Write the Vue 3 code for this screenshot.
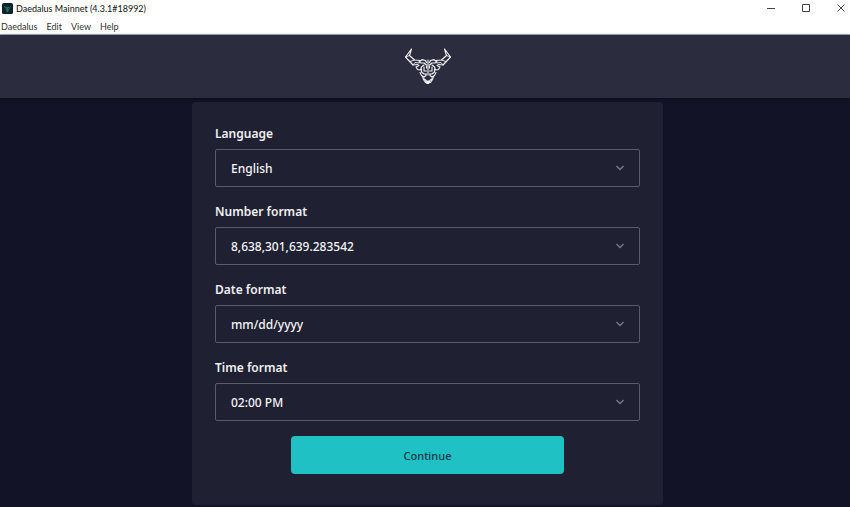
<template>
  <div class="window">
    <header class="titlebar">
      <svg class="app-icon" viewBox="0 0 12 12" aria-hidden="true">
        <rect width="12" height="12" rx="2" fill="#0b2229" />
        <path d="M2 3l2 2h4l2-2M4 5l1 3 1 2 1-2 1-3M6 5v4" fill="none" stroke="#277d78" stroke-width="0.9" />
      </svg>
      <span class="title">Daedalus Mainnet (4.3.1#18992)</span>
      <div class="window-controls">
        <button type="button" aria-label="Minimize">
          <svg viewBox="0 0 10 10"><path d="M1 5.5h8" /></svg>
        </button>
        <button type="button" aria-label="Maximize">
          <svg viewBox="0 0 10 10"><path d="M1.5 1.5h7v7h-7z" /></svg>
        </button>
        <button type="button" aria-label="Close">
          <svg viewBox="0 0 10 10"><path d="M1.5 1.5l7 7M8.5 1.5l-7 7" /></svg>
        </button>
      </div>
    </header>

    <nav class="menubar">
      <button v-for="item in menu" :key="item" type="button">{{ item }}</button>
    </nav>

    <div class="topbar">
      <svg class="logo" viewBox="0 0 48 38" role="img" aria-label="Daedalus">
        <g fill="none" stroke="#f2f3f6" stroke-linejoin="round" stroke-linecap="round">
          <g v-for="side in sides" :key="side" :transform="side">
            <path stroke-width="1.1" d="M16.5 13.5L10.5 13L5.5 8.5L7.5 2L1.5 10L9 18L14 17.5" />
            <path stroke-width="0.9" d="M1.5 10l4-1.5M6 14.5l4.5-1.5M9 18l2-2.5 4 .5" />
            <path stroke-width="1.2" d="M22.5 15.5l-1-2-3.5-.8-3 2.3 2 1h3l2.5 2" />
            <path stroke-width="1.1" d="M15 18.5l-3 1.5 1.5 2.5 3 .5 1-3 2.5-2" />
            <path stroke-width="1.1" d="M16 25.5l1.5 3 2.5 1.5M17.5 22v3l2.5 2h2.5M20 20v4h2.5M22.5 21v-2" />
            <path stroke-width="1.1" d="M18.5 29.5l1 3 2 3h2.5M20 30l2-1.5v-1.5M20.5 32l1.5 1.5" />
          </g>
          <path stroke-width="1.1" d="M24 13v15" />
          <path fill="#f2f3f6" stroke-width="1" d="M22 34h4l-1 2.5h-2z" />
        </g>
      </svg>
    </div>

    <main class="content">
      <form class="card" @submit.prevent>
        <div v-for="field in fields" :key="field.id" class="field">
          <label :for="field.id">{{ field.label }}</label>
          <div class="select-wrap">
            <select :id="field.id" v-model="field.value">
              <option v-for="option in field.options" :key="option">{{ option }}</option>
            </select>
            <svg class="chevron" viewBox="0 0 10 6" aria-hidden="true">
              <path d="M1.5 1l3.5 3.5L8.5 1" />
            </svg>
          </div>
        </div>
        <button class="continue" type="submit">Continue</button>
      </form>
    </main>
  </div>
</template>

<script setup>
import { reactive } from 'vue'

const menu = ['Daedalus', 'Edit', 'View', 'Help']

// the logo is one half drawn twice, the second time mirrored
const sides = ['translate(0 0)', 'translate(48 0) scale(-1 1)']

const fields = reactive([
  { id: 'language', label: 'Language', value: 'English', options: ['English', 'Japanese'] },
  {
    id: 'number-format',
    label: 'Number format',
    value: '8,638,301,639.283542',
    options: ['8,638,301,639.283542', '8.638.301.639,283542', '8 638 301 639.283542'],
  },
  { id: 'date-format', label: 'Date format', value: 'mm/dd/yyyy', options: ['mm/dd/yyyy', 'dd/mm/yyyy', 'yyyy/mm/dd'] },
  { id: 'time-format', label: 'Time format', value: '02:00 PM', options: ['02:00 PM', '14:00'] },
])
</script>

<style>
body {
  background: #121326;
}
</style>

<style scoped>
.window {
  display: flex;
  flex-direction: column;
  min-height: 100vh;
  box-sizing: border-box;
  background: #121326;
  font-family: "Noto Sans", sans-serif;
}
button {
  border: 0;
  padding: 0;
  background: none;
  font-family: inherit;
}
.titlebar {
  display: flex;
  align-items: center;
  height: 18px;
  padding: 0 4px 2px 2px;
  box-sizing: border-box;
  background: #fff;
  color: #111;
  font-family: Lato, sans-serif;
  font-size: 9px;
}
.app-icon {
  width: 11px;
  height: 11px;
  margin-right: 3px;
}
.window-controls {
  display: flex;
  gap: 25px;
  margin-left: auto;
}
.window-controls button {
  display: flex;
}
.window-controls svg {
  width: 10px;
  height: 10px;
  fill: none;
  stroke: #444;
  stroke-width: 1;
}
.menubar {
  display: flex;
  align-items: center;
  gap: 9px;
  height: 17px;
  padding-left: 1px;
  box-sizing: border-box;
  background: #fff;
  border-bottom: 1px solid #aaaab2;
  font-family: Lato, sans-serif;
}
.menubar button {
  color: #333;
  font-size: 9px;
}
.topbar {
  display: flex;
  align-items: center;
  justify-content: center;
  height: 63px;
  padding: 0 0 2px 5px;
  box-sizing: border-box;
  background: #2b2c3e;
  box-shadow: 0 1px 4px rgba(0, 0, 0, 0.4);
}
.logo {
  width: 48px;
  height: 38px;
}
.content {
  display: flex;
  justify-content: center;
  padding: 4px 0 3px 5px;
}
.card {
  display: flex;
  flex-direction: column;
  width: 471px;
  max-width: 100%;
  padding: 22px 23px 31px;
  box-sizing: border-box;
  border-radius: 4px;
  background: #1f2031;
}
.field {
  display: flex;
  flex-direction: column;
  gap: 5px;
  margin-bottom: 15px;
}
label {
  color: #f0f0f3;
  font-size: 12px;
  font-weight: 600;
  line-height: 20px;
}
.select-wrap {
  display: grid;
  align-items: center;
}
select {
  grid-area: 1 / 1;
  width: 100%;
  height: 38px;
  padding: 0 40px 0 15px;
  appearance: none;
  border: 1px solid #5a5b6a;
  border-radius: 2px;
  background: transparent;
  color: #f4f4f6;
  font-family: inherit;
  font-size: 12px;
  font-weight: 500;
}
.chevron {
  grid-area: 1 / 1;
  justify-self: end;
  width: 10px;
  height: 6px;
  margin-right: 15px;
  fill: none;
  stroke: #777887;
  stroke-width: 1.4;
  pointer-events: none;
}
.continue {
  align-self: center;
  width: 273px;
  max-width: 100%;
  height: 38px;
  border-radius: 4px;
  background: #20c1c4;
  color: #14384a;
  font-size: 11px;
  font-weight: 500;
}
</style>
